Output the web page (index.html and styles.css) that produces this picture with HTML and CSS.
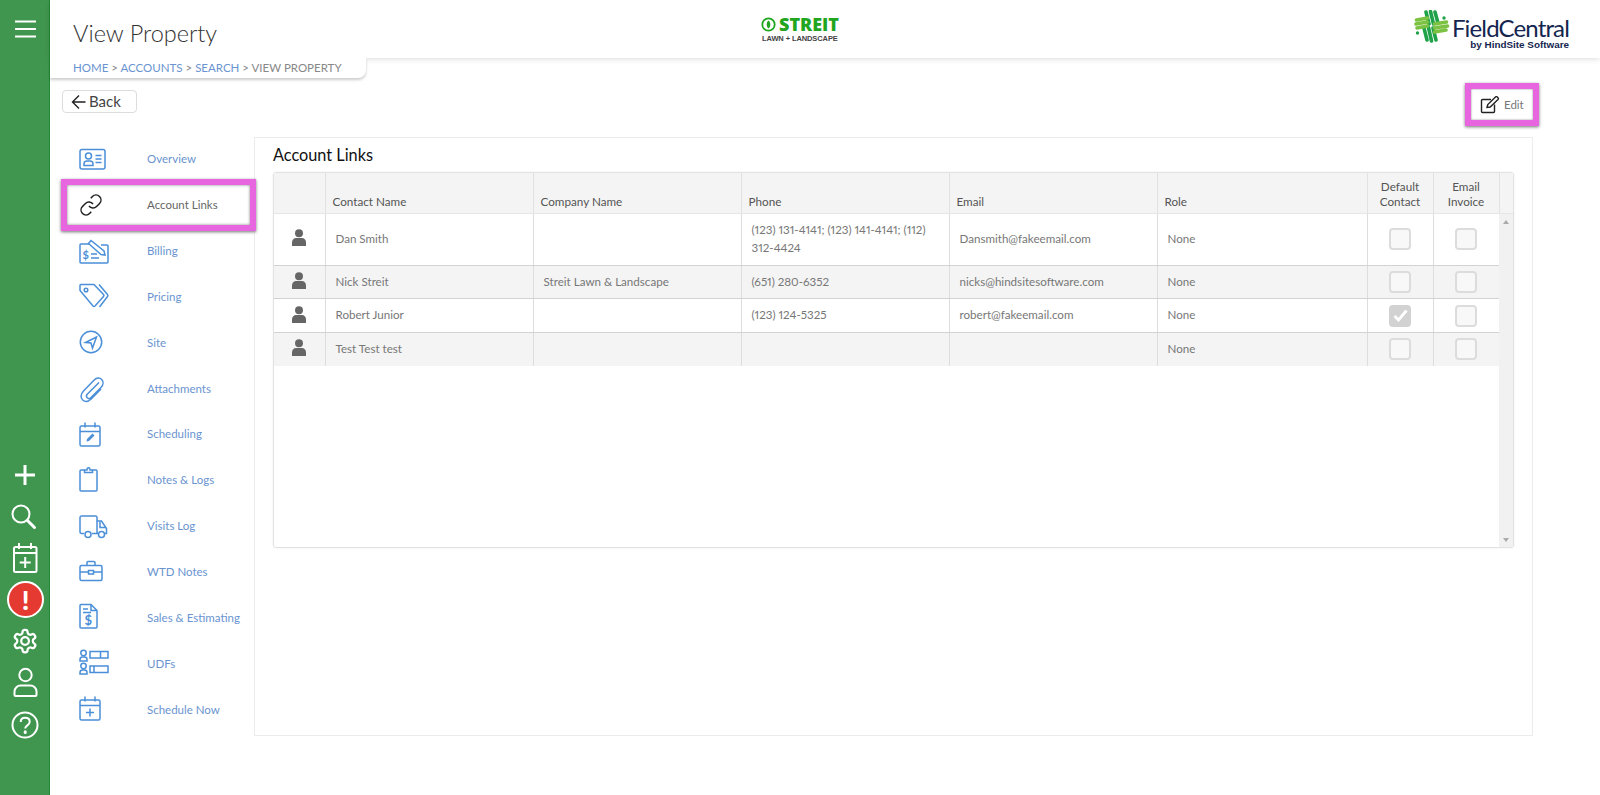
FILE: index.html
```html
<!DOCTYPE html>
<html lang="en">
<head>
<meta charset="utf-8">
<title>View Property</title>
<link rel="stylesheet" href="styles.css">
</head>
<body>
<div class="app">
  <aside class="rail">
    <svg class="rail-burger" width="49" height="24" viewBox="0 0 49 24"><path d="M15 2.500h21M15 10h21M15 17.500h21"/></svg>
    <div class="rail-tools">
      <div class="rail-item"><svg class="plus" width="49" height="30" viewBox="0 -2 49 30"><path d="M15 15h20M25 5v20"/></svg></div>
      <div class="rail-item"><svg width="49" height="36" viewBox="0 -2 49 36"><circle cx="21" cy="15" r="8.500"/><path class="thick" d="M27.500 21.500l7 7"/></svg></div>
      <div class="rail-item"><svg width="49" height="36" viewBox="0 -1 49 36"><rect x="14" y="7" width="22.500" height="25" rx="1.500"/><path d="M14 13h22.500M19 3v6M31 3v6M25.200 17v11M19.700 22.500h11"/></svg></div>
      <div class="rail-item"><div class="rail-alert"><span class="rail-alert-mark">!</span></div></div>
      <div class="rail-item"><svg width="49" height="32" viewBox="0 0 49 32"><g transform="translate(11.500 2.500) scale(1.130)"><path d="M12.220 2h-.44a2 2 0 0 0-2 2v.18a2 2 0 0 1-1 1.730l-.43.25a2 2 0 0 1-2 0l-.15-.08a2 2 0 0 0-2.730.73l-.22.38a2 2 0 0 0 .73 2.730l.15.1a2 2 0 0 1 1 1.720v.51a2 2 0 0 1-1 1.740l-.15.09a2 2 0 0 0-.73 2.730l.22.38a2 2 0 0 0 2.730.73l.15-.08a2 2 0 0 1 2 0l.43.25a2 2 0 0 1 1 1.730V20a2 2 0 0 0 2 2h.44a2 2 0 0 0 2-2v-.18a2 2 0 0 1 1-1.730l.43-.25a2 2 0 0 1 2 0l.15.08a2 2 0 0 0 2.730-.73l.22-.39a2 2 0 0 0-.73-2.730l-.15-.08a2 2 0 0 1-1-1.740v-.5a2 2 0 0 1 1-1.740l.15-.09a2 2 0 0 0 .73-2.730l-.22-.38a2 2 0 0 0-2.730-.73l-.15.08a2 2 0 0 1-2 0l-.43-.25a2 2 0 0 1-1-1.730V4a2 2 0 0 0-2-2z"/><circle cx="12" cy="12" r="3.400"/></g></svg></div>
      <div class="rail-item"><svg width="49" height="40" viewBox="0 -1 49 40"><circle cx="25.500" cy="11" r="6.200"/><path d="M14.500 31v-3.500c0-3.500 3-6 6-6h10c3 0 6 2.500 6 6V31c0 .6-.4 1-1 1h-20c-.6 0-1-.4-1-1z"/></svg></div>
      <div class="rail-item"><svg width="49" height="30" viewBox="0 0 49 30"><circle cx="25" cy="15" r="12.500"/><path d="M20.700 12c0-2.700 2-4.200 4.500-4.200S29.700 9.300 29.700 11.800c0 3.700-4.500 3.400-4.500 6.700"/><path class="thick" d="M25.200 21.800v.6"/></svg></div>
    </div>
  </aside>

  <div class="main">
    <header class="topbar">
      <h1 class="page-title">View Property</h1>
      <div class="streit">
        <div class="streit-top">
          <svg class="streit-mark" width="15" height="15" viewBox="0 0 15 15"><circle cx="7.500" cy="7.500" r="6.200"/><path d="M7.500 3.500c2.400 2 2.400 6 0 8-2.400-2-2.400-6 0-8z"/></svg>
          <span class="streit-name">STREIT</span>
        </div>
        <div class="streit-sub">LAWN + LANDSCAPE</div>
      </div>
      <div class="fc">
        <svg class="fc-mark" width="36" height="33" viewBox="0 0 36 33">
          <g class="fc-dark"><path d="M12 2l3 12M16.500 1.500l3 12.500M21 2l3 11"/><path d="M10 18l3 12M14.500 17.500l3 13.500M19 18l3 12"/></g>
          <g class="fc-light"><path d="M2.500 10l11-2M2 14l11.500-2M3 18l10.500-2"/><path d="M20.500 14l12-2M20.500 18l13-2M20.500 22l11.500-2"/></g>
          <circle class="fc-dot" cx="30" cy="8" r="1.700"/><circle class="fc-dot" cx="3.500" cy="23" r="1.700"/>
        </svg>
        <div class="fc-text">
          <div class="fc-name">FieldCentral</div>
          <div class="fc-by">by HindSite Software</div>
        </div>
      </div>
    </header>
    <nav class="crumbs"><a>HOME</a> &gt; <a>ACCOUNTS</a> &gt; <a>SEARCH</a> &gt; VIEW PROPERTY</nav>

    <div class="toolbar">
      <button class="back-btn" type="button">
        <svg width="16" height="16" viewBox="0 0 16 16"><path d="M14.500 8H1.500M8 1.500L1.500 8 8 14.500"/></svg>
        <span>Back</span>
      </button>
      <button class="edit-btn" type="button">
        <svg width="20" height="18" viewBox="0 0 20 18"><path class="edit-sq" d="M11 3.500H2.500a1 1 0 0 0-1 1v11a1 1 0 0 0 1 1h11a1 1 0 0 0 1-1V8.500"/><path class="edit-pen" d="M7 11.500l.8-3L15.500 1a1.300 1.300 0 0 1 1.800 0l.7.700a1.300 1.300 0 0 1 0 1.800L10.200 11z"/></svg>
        <span>Edit</span>
      </button>
    </div>

    <div class="content">
      <ul class="side-nav">
        <li class="nav-item">
          <svg class="nav-icon" width="30" height="30" viewBox="0 0 30 30"><rect x="1" y="5.500" width="25" height="19.500" rx="2"/><circle cx="9.500" cy="12" r="3"/><path d="M5 21.500v-1.500c0-2 1.500-3 3-3h3c1.500 0 3 1 3 3v1.500zM16.500 11.500h6M16.500 15h6M16.500 18.500h6"/></svg>
          <a>Overview</a>
        </li>
        <li class="nav-item is-active">
          <svg class="nav-icon" width="30" height="30" viewBox="0 0 30 30"><g transform="translate(0 3)"><path d="M10 13a5 5 0 0 0 7.540.54l3-3a5 5 0 0 0-7.070-7.070l-1.720 1.710"/><path d="M14 11a5 5 0 0 0-7.540-.54l-3 3a5 5 0 0 0 7.070 7.070l1.710-1.710"/></g></svg>
          <a>Account Links</a>
        </li>
        <li class="nav-item">
          <svg class="nav-icon" width="30" height="30" viewBox="0 0 30 30"><path d="M10 8H2a1 1 0 0 0-1 1v17a1 1 0 0 0 1 1h26a1 1 0 0 0 1-1V10a1 1 0 0 0-1-1h-6"/><path d="M9.500 7.500l2.500-3 13 10.500 1 4-4-.5zM12 18h6M12 22h8"/><text class="bill-dollar" x="3.500" y="23">$</text></svg>
          <a>Billing</a>
        </li>
        <li class="nav-item">
          <svg class="nav-icon" width="30" height="30" viewBox="0 0 30 30"><path d="M1 9.500V4.500a1 1 0 0 1 1-1h13l9.500 10a1.500 1.500 0 0 1 0 2L16 25a1.500 1.500 0 0 1-2 0z"/><path d="M20 3.500l8.500 10a1.500 1.500 0 0 1 0 2L20.500 26"/><circle cx="7" cy="9" r="1.800"/></svg>
          <a>Pricing</a>
        </li>
        <li class="nav-item">
          <svg class="nav-icon" width="30" height="30" viewBox="0 0 30 30"><circle cx="12" cy="15" r="10.700"/><path d="M6.500 15.500l11-5.500-4 11-1.500-5z"/></svg>
          <a>Site</a>
        </li>
        <li class="nav-item">
          <svg class="nav-icon" width="30" height="30" viewBox="0 0 30 30"><path d="M20 9.500L8 21.500a2.500 2.500 0 0 0 3.500 3.500L22 14.500c2.600-2.600 2.600-6 .7-8s-5-2-7.500.5L4.500 18c-3.200 3.500-3 7 -.8 9 2.200 2 5.500 1.800 8.500-1L22 16"/></svg>
          <a>Attachments</a>
        </li>
        <li class="nav-item">
          <svg class="nav-icon" width="30" height="30" viewBox="0 0 30 30"><rect x="1" y="7" width="20" height="20" rx="1.500"/><path d="M1 12.500h20M6 3.500v5M16 3.500v5"/><path class="solid" d="M7.500 22.500l.5-2.500 5.500-5.500 2 2L10 22z"/></svg>
          <a>Scheduling</a>
        </li>
        <li class="nav-item">
          <svg class="nav-icon" width="30" height="30" viewBox="0 0 30 30"><path d="M5.500 5H2a1 1 0 0 0-1 1v19a1 1 0 0 0 1 1h15a1 1 0 0 0 1-1V6a1 1 0 0 0-1-1h-3.500"/><path d="M5.500 7.500V5h2.500c0-3 3-3 3 0h2.500v2.500z"/></svg>
          <a>Notes &amp; Logs</a>
        </li>
        <li class="nav-item">
          <svg class="nav-icon" width="30" height="30" viewBox="0 0 30 30"><path d="M5 22.500H2.500a1.500 1.500 0 0 1-1.500-1.500V6.500A1.500 1.500 0 0 1 2.500 5h14A1.500 1.500 0 0 1 18 6.500v16h-5M18 10h4.500l5 7.500v5h-2M18 22.500h1"/><circle cx="9" cy="23.500" r="3"/><circle cx="22.500" cy="23.500" r="3"/><path d="M21 10.500v6h6"/></svg>
          <a>Visits Log</a>
        </li>
        <li class="nav-item">
          <svg class="nav-icon" width="30" height="30" viewBox="0 0 30 30"><rect x="1" y="8.500" width="22" height="15" rx="1.500"/><path d="M8 8.500V5.500a1 1 0 0 1 1-1h6a1 1 0 0 1 1 1v3M1 15h8.500M14.500 15H23M9.500 13.500h5v3.500h-5z"/></svg>
          <a>WTD Notes</a>
        </li>
        <li class="nav-item">
          <svg class="nav-icon" width="30" height="30" viewBox="0 0 30 30"><path d="M12 2.500H2a1 1 0 0 0-1 1v21.500a1 1 0 0 0 1 1h15a1 1 0 0 0 1-1V8.500zM12 2.500v6h6M4 7h5M4 10.500h8"/><text class="sales-dollar" x="5.500" y="23">$</text></svg>
          <a>Sales &amp; Estimating</a>
        </li>
        <li class="nav-item">
          <svg class="nav-icon" width="30" height="30" viewBox="0 0 30 30"><circle cx="4.500" cy="5" r="2.700"/><path d="M1 13v-1.500C1 10 2 9 3.500 9h2C7 9 8 10 8 11.500V13zM1 26v-1.500C1 23 2 22 3.500 22h2C7 22 8 23 8 24.500V26z"/><circle cx="4.500" cy="18" r="2.700"/><rect x="11" y="3.500" width="18" height="6.500"/><rect x="11" y="18" width="18" height="6.500"/><path d="M21.500 3.500v6.500M15 18v6.500"/></svg>
          <a>UDFs</a>
        </li>
        <li class="nav-item">
          <svg class="nav-icon" width="30" height="30" viewBox="0 0 30 30"><rect x="1" y="6" width="20" height="20" rx="1.500"/><path d="M1 11.500h20M6 2.500v5M16 2.500v5M11 14.500v8M7 18.500h8"/></svg>
          <a>Schedule Now</a>
        </li>
      </ul>

      <section class="panel">
        <h2 class="panel-title">Account Links</h2>
        <div class="grid-box">
          <table class="grid grid-head">
            <colgroup><col class="c-icon"><col class="c-w"><col class="c-w"><col class="c-w"><col class="c-w"><col class="c-role"><col class="c-chk"><col class="c-chk"><col class="c-scroll"></colgroup>
            <thead>
              <tr>
                <th></th><th>Contact Name</th><th>Company Name</th><th>Phone</th><th>Email</th><th>Role</th>
                <th class="th-center">Default Contact</th><th class="th-center">Email Invoice</th><th></th>
              </tr>
            </thead>
          </table>
          <div class="grid-body">
            <table class="grid grid-rows">
              <colgroup><col class="c-icon"><col class="c-w"><col class="c-w"><col class="c-w"><col class="c-w"><col class="c-role"><col class="c-chk"><col class="c-chk"></colgroup>
              <tbody>
                <tr class="r-tall">
                  <td class="td-center"><svg class="person" width="16" height="17" viewBox="0 0 16 17"><circle cx="8" cy="4.300" r="4"/><path d="M1 17v-3.500C1 10.500 3 9 5 9h6c2 0 4 1.500 4 4.500V17z"/></svg></td>
                  <td>Dan Smith</td><td></td>
                  <td>(123) 131-4141; (123) 141-4141; (112) 312-4424</td>
                  <td>Dansmith@fakeemail.com</td><td>None</td>
                  <td class="td-center"><span class="chk"></span></td><td class="td-center"><span class="chk"></span></td>
                </tr>
                <tr class="r-alt r-33">
                  <td class="td-center"><svg class="person" width="16" height="17" viewBox="0 0 16 17"><circle cx="8" cy="4.300" r="4"/><path d="M1 17v-3.500C1 10.500 3 9 5 9h6c2 0 4 1.500 4 4.500V17z"/></svg></td>
                  <td>Nick Streit</td><td>Streit Lawn &amp; Landscape</td>
                  <td>(651) 280-6352</td>
                  <td>nicks@hindsitesoftware.com</td><td>None</td>
                  <td class="td-center"><span class="chk"></span></td><td class="td-center"><span class="chk"></span></td>
                </tr>
                <tr class="r-34">
                  <td class="td-center"><svg class="person" width="16" height="17" viewBox="0 0 16 17"><circle cx="8" cy="4.300" r="4"/><path d="M1 17v-3.500C1 10.500 3 9 5 9h6c2 0 4 1.500 4 4.500V17z"/></svg></td>
                  <td>Robert Junior</td><td></td>
                  <td>(123) 124-5325</td>
                  <td>robert@fakeemail.com</td><td>None</td>
                  <td class="td-center"><span class="chk is-on"><svg width="15" height="13" viewBox="0 0 15 13"><path d="M1.500 7l4 4 8-9.500"/></svg></span></td><td class="td-center"><span class="chk"></span></td>
                </tr>
                <tr class="r-alt r-33">
                  <td class="td-center"><svg class="person" width="16" height="17" viewBox="0 0 16 17"><circle cx="8" cy="4.300" r="4"/><path d="M1 17v-3.500C1 10.500 3 9 5 9h6c2 0 4 1.500 4 4.500V17z"/></svg></td>
                  <td>Test Test test</td><td></td><td></td><td></td><td>None</td>
                  <td class="td-center"><span class="chk"></span></td><td class="td-center"><span class="chk"></span></td>
                </tr>
              </tbody>
            </table>
            <div class="scrollbar"><span class="arrow-up"></span><span class="arrow-down"></span></div>
          </div>
        </div>
      </section>
    </div>
  </div>
</div>
</body>
</html>
```

FILE: styles.css
```css
* { box-sizing: border-box; }

html, body {
  margin: 0;
  height: 100%;
  overflow: hidden;
  background: #fff;
}

body {
  font-family: Lato, "Open Sans", sans-serif;
  font-size: 12px;
  color: #666;
}

.app {
  display: flex;
  height: 795px;
}

/* left rail */
.rail {
  flex: 0 0 50px;
  background: #40964f;
  border-right: 1px solid #1f8a35;
  display: flex;
  flex-direction: column;
  justify-content: space-between;
  padding: 19px 0 49px;
}

.rail svg { display: block; fill: none; stroke: #fff; stroke-width: 2; }
.rail-tools { display: flex; flex-direction: column; }
.rail-item { height: 42px; display: flex; align-items: center; }
.rail .thick { stroke-width: 3; stroke-linecap: round; }
.rail .plus { stroke-width: 3; }

.rail-alert {
  width: 37px;
  height: 37px;
  margin-left: 7px;
  border-radius: 50%;
  background: #e53a32;
  border: 2px solid #fff;
  display: flex;
  align-items: center;
  justify-content: center;
}

.rail-alert-mark {
  font-size: 27px;
  font-weight: 900;
  line-height: 1;
  color: #fff;
}

/* main column */
.main {
  flex: 1;
  min-width: 0;
  display: flex;
  flex-direction: column;
}

.topbar {
  height: 58px;
  flex: none;
  display: flex;
  align-items: flex-start;
  padding: 0 31px 0 23px;
  background: #fff;
  box-shadow: 0 1px 6px rgba(0, 0, 0, .14);
  position: relative;
}

.page-title {
  flex: 0 0 689px;
  margin: 17px 0 0;
  font-size: 23.500px;
  line-height: 33px;
  font-weight: 300;
  color: #333;
}

.streit { margin-top: 15px; width: 78px; }
.streit-top { display: flex; align-items: center; gap: 3px; margin-left: -1px; }
.streit-mark { flex: none; }
.streit-mark circle { fill: none; stroke: #1fa51e; stroke-width: 1.800; }
.streit-mark path { fill: #1fa51e; }

.streit-name {
  font-family: "Open Sans", sans-serif;
  font-size: 18px;
  line-height: 18px;
  font-weight: 800;
  color: #1fa51e;
}

.streit-sub {
  margin-top: 1px;
  font-family: "Liberation Sans", sans-serif;
  font-size: 7.500px;
  line-height: 9px;
  font-weight: 700;
  white-space: nowrap;
  letter-spacing: -.1px;
  color: #444;
}

.fc {
  margin-left: auto;
  display: flex;
  gap: 2px;
  padding-top: 10px;
}

.fc-mark { flex: none; fill: none; stroke-width: 3.600; stroke-linecap: round; }
.fc-dark { stroke: #1fa24a; }
.fc-light { stroke: #7cc242; }
.fc-dot { fill: #1fa24a; stroke: none; }
.fc-text { text-align: right; margin-top: 4px; }

.fc-name {
  font-size: 24px;
  line-height: 27px;
  font-weight: 400;
  letter-spacing: -.85px;
  color: #14264f;
}

.fc-by {
  margin-top: -1px;
  font-family: "Liberation Sans", sans-serif;
  font-size: 9.900px;
  line-height: 10px;
  font-weight: 700;
  color: #14264f;
}

.crumbs {
  flex: none;
  width: 316px;
  height: 20px;
  padding: 1px 0 0 23px;
  background: #fff;
  border-radius: 0 0 8px 0;
  box-shadow: 0 2px 3px rgba(0, 0, 0, .2);
  font-size: 11.500px;
  line-height: 18px;
  color: #888;
  position: relative;
  white-space: nowrap;
}

.crumbs a { color: #6a94d0; }

.toolbar {
  flex: none;
  height: 43px;
  margin: 5px 61px 0 12px;
  display: flex;
  justify-content: space-between;
  align-items: flex-start;
}

.back-btn {
  margin-top: 7px;
  width: 75px;
  height: 23px;
  padding: 0 0 0 8px;
  display: flex;
  align-items: center;
  gap: 2px;
  background: #fff;
  border: 1px solid #ddd;
  border-radius: 4px;
  font: 400 15px/1 Lato, sans-serif;
  color: #444;
}

.back-btn svg { fill: none; stroke: #222; stroke-width: 1.400; }

.edit-btn {
  width: 74px;
  height: 43px;
  padding: 0 0 0 9px;
  display: flex;
  align-items: center;
  gap: 4px;
  background: #fff;
  border: 6px solid #e766e0;
  box-shadow: 0 1px 3px rgba(0, 0, 0, .55), inset 0 0 2px rgba(0, 0, 0, .5);
  font: 400 11.500px/1 Lato, sans-serif;
  color: #777;
}

.edit-btn svg { fill: none; stroke-width: 1.400; }
.edit-sq { stroke: #222; }
.edit-pen { stroke: #222; fill: #fff; }

.content {
  flex: 1;
  min-height: 0;
  margin-left: 12px;
  display: flex;
  align-items: flex-start;
}

/* side navigation */
.side-nav {
  flex: 0 0 192px;
  margin: 10px 0 0;
  padding: 0;
  list-style: none;
  display: grid;
  grid-auto-rows: 45.850px;
}

.nav-item {
  position: relative;
  display: flex;
  align-items: center;
  padding-left: 17px;
}

.nav-item a {
  color: #6a94d0;
  font-size: 11.500px;
  white-space: nowrap;
}

.nav-icon {
  flex: 0 0 30px;
  margin-right: 38px;
  fill: none;
  stroke: #4a8fd8;
  stroke-width: 1.500;
  overflow: visible;
}

.nav-icon .solid { fill: #4a8fd8; stroke: none; }

.bill-dollar, .sales-dollar {
  font-family: Lato, sans-serif;
  font-weight: 700;
  stroke: none;
  fill: #4a8fd8;
}

.bill-dollar { font-size: 11px; }
.sales-dollar { font-size: 13px; }

.nav-item.is-active a { color: #666; }
.nav-item.is-active .nav-icon { stroke: #1e1e1e; }

.nav-item.is-active::after {
  content: "";
  position: absolute;
  left: -1px;
  right: -2px;
  top: -3px;
  bottom: -3px;
  border: 6px solid #e766e0;
  box-shadow: 0 1px 3px rgba(0, 0, 0, .55), inset 0 0 3px rgba(0, 0, 0, .5);
  pointer-events: none;
}

/* panel and grid */
.panel {
  flex: 0 0 1279px;
  height: 599px;
  margin-top: 11px;
  padding: 5px 18px 0;
  border: 1px solid #ececec;
  background: #fff;
}

.panel-title {
  margin: 0 0 6px;
  font-size: 16.300px;
  line-height: 23px;
  font-weight: 400;
  color: #111;
}

.grid-box {
  width: 1241px;
  height: 376px;
  border: 1px solid #e2e2e2;
  border-radius: 3px;
  box-shadow: 0 0 2px rgba(0, 0, 0, .08);
  overflow: hidden;
}

.grid {
  border-collapse: collapse;
  table-layout: fixed;
}

.grid-head { width: 1239px; font-size: 11.700px; }

.grid-rows {
  width: 1225px;
  font-size: 11.600px;
  font-variant-numeric: proportional-nums;
  align-self: flex-start;
}

.c-icon { width: 51px; }
.c-w { width: 208px; }
.c-role { width: 210px; }
.c-chk { width: 66px; }
.c-scroll { width: 14px; }

.grid-head th {
  height: 40px;
  padding: 0 7px 4px;
  vertical-align: bottom;
  text-align: left;
  font-weight: 400;
  line-height: 15px;
  color: #555;
  background: #f4f4f4;
  border-right: 1px solid #e2e2e2;
  border-bottom: 1px solid #e6e6e6;
}

.grid-head .th-center { text-align: center; padding: 0 4px 4px; }
.grid-head th:last-child { border-right: 0; }

.grid-body { display: flex; height: 334px; }

.grid-rows td {
  padding: 0 10px;
  line-height: 18.500px;
  color: #777;
  border-right: 1px solid #ddd;
  border-bottom: 1px solid #d2d2d2;
}

.grid-rows tr:last-child td { border-bottom: 0; }
.grid-rows td:last-child { border-right: 0; }
.r-tall { height: 52px; }
.r-33 { height: 33px; }
.r-34 { height: 34px; }
.r-alt td { background: #f4f4f4; }
.grid-rows .td-center { padding: 0; text-align: center; }

.person { display: block; margin: -3px auto 0; fill: #666; }

.chk {
  display: inline-flex;
  align-items: center;
  justify-content: center;
  width: 22px;
  height: 22px;
  border: 2px solid #dcdcdc;
  border-radius: 4px;
  background: #f8f8f8;
  vertical-align: middle;
}

.chk.is-on { background: #d2d2d2; border-color: #d2d2d2; }
.chk svg { fill: none; stroke: #fff; stroke-width: 2.800; }

.scrollbar {
  position: relative;
  flex: 0 0 14px;
  background: #f1f1f1;
}

.arrow-up, .arrow-down {
  position: absolute;
  left: 4px;
  width: 0;
  height: 0;
  border-left: 3px solid transparent;
  border-right: 3px solid transparent;
}

.arrow-up { top: 6px; border-bottom: 4px solid #aaa; }
.arrow-down { bottom: 6px; border-top: 4px solid #aaa; }
```
